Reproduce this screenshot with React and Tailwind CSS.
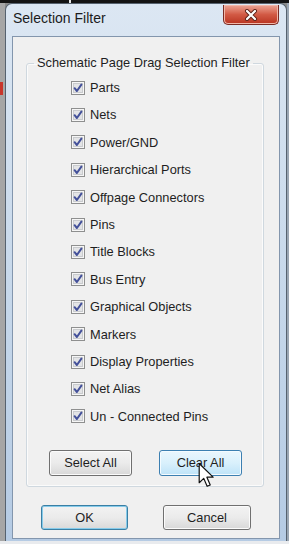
import React from "react";

const items = [
  "Parts",
  "Nets",
  "Power/GND",
  "Hierarchical Ports",
  "Offpage Connectors",
  "Pins",
  "Title Blocks",
  "Bus Entry",
  "Graphical Objects",
  "Markers",
  "Display Properties",
  "Net Alias",
  "Un - Connected Pins",
];

function CheckBox() {
  return (
    <svg width="14" height="14" viewBox="0 0 14 14" className="shrink-0">
      <rect x="0.5" y="0.5" width="13" height="13" fill="#f6f6f6" stroke="#8e8f8f" />
      <rect x="2.5" y="2.5" width="9" height="9" fill="#e3e4e6" stroke="#c9cbce" />
      <path d="M3.6 7.2 L5.9 10 L10.4 3.6" fill="none" stroke="#44519a" strokeWidth="2" strokeLinecap="round" strokeLinejoin="round" />
    </svg>
  );
}

function Button({ children, kind = "normal", className = "" }) {
  const look =
    kind === "hover"
      ? "border-[#3c7fb1] bg-gradient-to-b from-[#eaf6fd] via-[#d9f0fc] to-[#bee3f8] shadow-[inset_0_0_0_1px_#f4fbff]"
      : kind === "default"
      ? "border-[#3a7fa4] bg-gradient-to-b from-[#f2f2f2] via-[#ebebeb] to-[#d9d9d9] shadow-[inset_0_0_0_1px_#86cbea]"
      : "border-[#707070] bg-gradient-to-b from-[#f3f3f3] via-[#ebebeb] to-[#d8d8d8] shadow-[inset_0_0_0_1px_#fbfbfb]";
  return (
    <div className={`flex items-center justify-center rounded-[3px] border text-[12.8px] text-[#1e1e1e] ${look} ${className}`}>
      {children}
    </div>
  );
}

export default function App() {
  return (
    <div className="relative flex h-[544px] w-[289px] flex-col overflow-hidden bg-[#8a8a8a] font-['Liberation_Sans',Arial,sans-serif]">
      <div className="relative h-[3px] bg-[#141414]">
        <div className="ml-[69px] h-[3px] w-[2px] bg-[#e8e8e8]" />
      </div>

      <div className="flex h-[538px]">
        <div className="flex w-[5px] flex-col bg-[#a6a6a6]">
          <div className="mt-[79px] h-[13px] w-[3px] bg-[#c8362c]" />
        </div>

        <div className="flex w-[282px] flex-col rounded-t-[7px] border border-b-0 border-[#56626f] bg-gradient-to-b from-[#dce7f3] via-[#c8d9eb] to-[#b5cbe4]">
          <div className="flex h-[32px] items-start">
            <div className="pl-[7px] pt-[6px] text-[14px] leading-[17px] text-[#1b1b1b]">Selection Filter</div>
            <div className="ml-auto mr-[7px] mt-[1px] flex h-[20px] w-[56px] items-center justify-center rounded-b-[5px] border border-t-0 border-[#7a2c24] bg-gradient-to-b from-[#eba596] via-[#d25a45] to-[#b8321f] shadow-[inset_0_0_0_1px_#f0b8aa]">
              <svg width="14" height="12" viewBox="0 0 14 12">
                <path d="M3 2 L11 10 M11 2 L3 10" stroke="#5a2018" strokeWidth="4" strokeLinecap="round" />
                <path d="M3 2 L11 10 M11 2 L3 10" stroke="#ffffff" strokeWidth="2.2" strokeLinecap="round" />
              </svg>
            </div>
          </div>

          <div className="mx-[6px] flex h-[503px] flex-col border border-[#8396ad] bg-[#f0f0f0] pt-[18px]">
            <fieldset className="ml-[13px] w-[238px] rounded-[3px] border border-[#cfd8df] pb-[10px] shadow-[inset_0_0_0_1px_#fbfbfb]">
              <legend className="ml-[7px] px-[3px] text-[12.8px] leading-[16px] text-[#1e1e1e]">
                Schematic Page Drag Selection Filter
              </legend>
              <div className="flex flex-col pl-[44px] pt-[3px]">
                {items.map((label) => (
                  <div key={label} className="flex h-[27.4px] items-center gap-[5px] text-[12.8px] text-[#1e1e1e]">
                    <CheckBox />
                    <span>{label}</span>
                  </div>
                ))}
              </div>
              <div className="mt-[20px] flex gap-[27px] pl-[22px]">
                <Button className="h-[26px] w-[83px]">Select All</Button>
                <Button kind="hover" className="h-[26px] w-[83px]">Clear All</Button>
              </div>
            </fieldset>

            <div className="mt-[18px] flex gap-[35px] pl-[28px]">
              <Button kind="default" className="h-[25px] w-[87px]">OK</Button>
              <Button className="h-[25px] w-[88px]">Cancel</Button>
            </div>
          </div>
        </div>

        <div className="flex-1 bg-[#9aa6b3]" />
      </div>

      <div className="h-[3px] bg-[#e9ebee]" />

      <svg className="absolute left-[198px] top-[462px]" width="18" height="27" viewBox="0 0 15 22">
        <path d="M1 1 L1 17 L4.8 13.4 L7.6 20 L10.2 18.9 L7.4 12.4 L12.6 12.4 Z" fill="#ffffff" stroke="#111111" strokeWidth="1" strokeLinejoin="round" />
      </svg>
    </div>
  );
}
